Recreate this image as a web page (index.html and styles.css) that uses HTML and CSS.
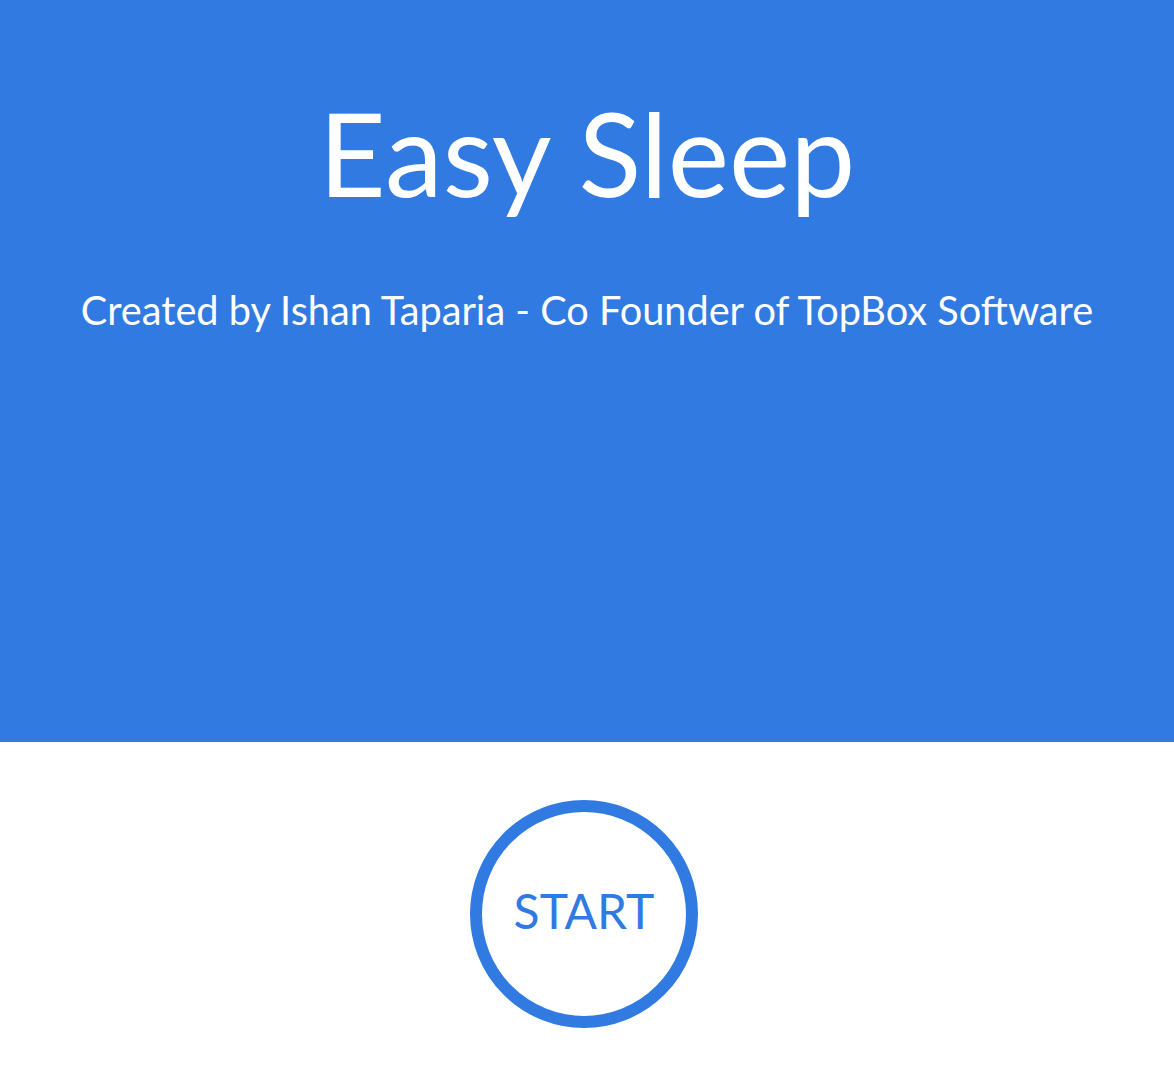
FILE: index.html
```html
<!DOCTYPE html>
<html>
<head>
<meta charset="utf-8">
<link rel="stylesheet" href="styles.css">
</head>
<body>
<header class="hero">
  <h1 class="title">Easy Sleep</h1>
  <p class="subtitle">Created by Ishan Taparia - Co Founder of TopBox Software</p>
</header>
<main class="action">
  <button class="start">START</button>
</main>
</body>
</html>
```
FILE: styles.css
```css
html, body {
  margin: 0;
  padding: 0;
  background: #ffffff;
}
body {
  font-family: "Lato", "Open Sans", sans-serif;
  width: 1174px;
  height: 1076px;
  overflow: hidden;
}
.hero {
  background: #307ae1;
  height: 742px;
  display: flex;
  flex-direction: column;
  align-items: center;
  color: #ffffff;
}
.title {
  margin: 83px 0 0 0;
  font-size: 116px;
  font-weight: 400;
  line-height: 140px;
}
.subtitle {
  margin: 62px 0 0 0;
  font-size: 39.7px;
  font-weight: 400;
  line-height: 50px;
}
.action {
  display: flex;
  justify-content: center;
  padding-top: 58px;
}
.start {
  width: 228px;
  height: 228px;
  border-radius: 50%;
  border: 12px solid #307ae1;
  background: #ffffff;
  color: #307ae1;
  font-family: "Lato", "Open Sans", sans-serif;
  font-size: 48px;
  font-weight: 400;
  padding: 0 0 8px 0;
  box-sizing: border-box;
  margin-left: -6px;
}
```
